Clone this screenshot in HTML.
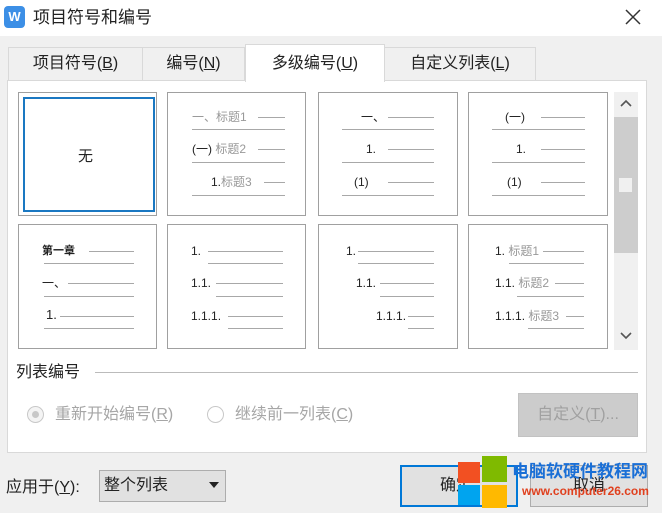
<!DOCTYPE html>
<html><head><meta charset="utf-8"><style>
*{margin:0;padding:0;box-sizing:border-box}
body{width:662px;height:513px;background:#f0f0f0;position:relative;overflow:hidden;font-family:"Liberation Sans","Noto Sans CJK SC",sans-serif;color:#222}
.a{position:absolute;white-space:nowrap}
.box{position:absolute;background:#fff;border:1px solid #a0a0a0}
.ln{position:absolute;height:1px;background:#a8a8a8}
.t{position:absolute;font-size:12px;line-height:14px;white-space:nowrap;color:#222}
.g{color:#999}
.tab{position:absolute;top:47px;height:34px;border:1px solid #d9d9d9;border-bottom:none;background:#f0f0f0;font-size:16px;line-height:32px;text-align:center}
u{text-decoration:underline}
</style></head><body>
<div class="a" style="left:0;top:0;width:662px;height:36px;background:#fff"></div>
<div class="a" style="left:4px;top:6px;width:21px;height:22px;background:#3c8fe6;border-radius:4px;color:#fff;font-size:13px;font-weight:bold;text-align:center;line-height:22px">W</div>
<div class="a" style="left:33px;top:7px;font-size:17px;line-height:22px">项目符号和编号</div>
<svg class="a" style="left:625px;top:9px" width="16" height="16"><path d="M1 1L15 15M15 1L1 15" stroke="#333" stroke-width="1.5"/></svg>

<div class="tab" style="left:8px;width:135px">项目符号(<u>B</u>)</div>
<div class="tab" style="left:142px;width:103px">编号(<u>N</u>)</div>
<div class="tab" style="left:384px;width:152px">自定义列表(<u>L</u>)</div>
<div class="a" style="left:7px;top:80px;width:640px;height:373px;background:#fff;border:1px solid #d9d9d9"></div>
<div class="tab" style="left:245px;top:44px;width:140px;height:38px;background:#fff;border-color:#d9d9d9;line-height:38px">多级编号(<u>U</u>)</div>

<!-- row 1 -->
<div class="box" style="left:18px;top:92px;width:139px;height:124px"></div>
<div class="a" style="left:23px;top:97px;width:132px;height:115px;border:2px solid #1a78c2"></div>
<div class="a" style="left:78px;top:145px;font-size:15px">无</div>

<div class="box" style="left:167px;top:92px;width:139px;height:124px"></div>
<div class="t g" style="left:192px;top:110px">一、标题1</div><div class="ln" style="left:258px;top:117px;width:27px"></div><div class="ln" style="left:192px;top:129px;width:93px"></div>
<div class="t g" style="left:192px;top:142px"><span style="color:#222">(一)</span> 标题2</div><div class="ln" style="left:258px;top:149px;width:27px"></div><div class="ln" style="left:192px;top:162px;width:93px"></div>
<div class="t g" style="left:211px;top:175px"><span style="color:#222">1.</span>标题3</div><div class="ln" style="left:264px;top:182px;width:21px"></div><div class="ln" style="left:192px;top:195px;width:93px"></div>

<div class="box" style="left:318px;top:92px;width:140px;height:124px"></div>
<div class="t" style="left:361px;top:110px">一、</div><div class="ln" style="left:388px;top:117px;width:46px"></div><div class="ln" style="left:342px;top:129px;width:92px"></div>
<div class="t" style="left:366px;top:142px">1.</div><div class="ln" style="left:388px;top:149px;width:46px"></div><div class="ln" style="left:342px;top:162px;width:92px"></div>
<div class="t" style="left:354px;top:175px">(1)</div><div class="ln" style="left:388px;top:182px;width:46px"></div><div class="ln" style="left:342px;top:195px;width:92px"></div>

<div class="box" style="left:468px;top:92px;width:140px;height:124px"></div>
<div class="t" style="left:505px;top:110px">(一)</div><div class="ln" style="left:541px;top:117px;width:44px"></div><div class="ln" style="left:492px;top:129px;width:93px"></div>
<div class="t" style="left:516px;top:142px">1.</div><div class="ln" style="left:541px;top:149px;width:44px"></div><div class="ln" style="left:492px;top:162px;width:93px"></div>
<div class="t" style="left:507px;top:175px">(1)</div><div class="ln" style="left:541px;top:182px;width:44px"></div><div class="ln" style="left:492px;top:195px;width:93px"></div>

<!-- row 2 -->
<div class="box" style="left:18px;top:224px;width:139px;height:125px"></div>
<div class="t" style="left:42px;top:244px;font-size:11px;font-weight:bold">第一章</div><div class="ln" style="left:89px;top:251px;width:45px"></div><div class="ln" style="left:44px;top:263px;width:90px"></div>
<div class="t" style="left:42px;top:276px">一、</div><div class="ln" style="left:68px;top:283px;width:66px"></div><div class="ln" style="left:44px;top:296px;width:90px"></div>
<div class="t" style="left:46px;top:308px;font-size:13px">1.</div><div class="ln" style="left:60px;top:316px;width:74px"></div><div class="ln" style="left:44px;top:328px;width:90px"></div>

<div class="box" style="left:167px;top:224px;width:139px;height:125px"></div>
<div class="t" style="left:191px;top:244px">1.</div><div class="ln" style="left:208px;top:251px;width:75px"></div><div class="ln" style="left:208px;top:263px;width:75px"></div>
<div class="t" style="left:191px;top:276px">1.1.</div><div class="ln" style="left:216px;top:283px;width:67px"></div><div class="ln" style="left:216px;top:296px;width:67px"></div>
<div class="t" style="left:191px;top:309px">1.1.1.</div><div class="ln" style="left:228px;top:316px;width:55px"></div><div class="ln" style="left:228px;top:328px;width:55px"></div>

<div class="box" style="left:318px;top:224px;width:140px;height:125px"></div>
<div class="t" style="left:346px;top:244px">1.</div><div class="ln" style="left:358px;top:251px;width:76px"></div><div class="ln" style="left:358px;top:263px;width:76px"></div>
<div class="t" style="left:356px;top:276px">1.1.</div><div class="ln" style="left:380px;top:283px;width:54px"></div><div class="ln" style="left:380px;top:296px;width:54px"></div>
<div class="t" style="left:376px;top:309px">1.1.1.</div><div class="ln" style="left:408px;top:316px;width:26px"></div><div class="ln" style="left:408px;top:328px;width:26px"></div>

<div class="box" style="left:468px;top:224px;width:140px;height:125px"></div>
<div class="t" style="left:495px;top:244px">1. <span class="g">标题1</span></div><div class="ln" style="left:543px;top:251px;width:41px"></div><div class="ln" style="left:509px;top:263px;width:75px"></div>
<div class="t" style="left:495px;top:276px">1.1. <span class="g">标题2</span></div><div class="ln" style="left:555px;top:283px;width:29px"></div><div class="ln" style="left:517px;top:296px;width:67px"></div>
<div class="t" style="left:495px;top:309px">1.1.1. <span class="g">标题3</span></div><div class="ln" style="left:566px;top:316px;width:18px"></div><div class="ln" style="left:528px;top:328px;width:56px"></div>

<!-- scrollbar -->
<div class="a" style="left:614px;top:92px;width:24px;height:258px;background:#f0f0f0"></div>
<div class="a" style="left:614px;top:117px;width:24px;height:136px;background:#cdcdcd"></div>
<div class="a" style="left:619px;top:178px;width:13px;height:14px;background:#f0f0f0"></div>
<svg class="a" style="left:619px;top:98px" width="14" height="10"><path d="M2 8L7 3L12 8" stroke="#555" stroke-width="1.6" fill="none"/></svg>
<svg class="a" style="left:619px;top:331px" width="14" height="10"><path d="M2 2L7 7L12 2" stroke="#555" stroke-width="1.6" fill="none"/></svg>

<div class="a" style="left:16px;top:363px;font-size:16px;line-height:20px">列表编号</div>
<div class="a" style="left:95px;top:372px;width:543px;height:1px;background:#bbb"></div>

<div class="a" style="left:27px;top:406px;width:17px;height:17px;border:1px solid #c8c8c8;border-radius:50%;background:#f4f4f4"></div>
<div class="a" style="left:32px;top:411px;width:7px;height:7px;border-radius:50%;background:#c8c8c8"></div>
<div class="a" style="left:55px;top:404px;font-size:16px;line-height:22px;color:#a6a6a6">重新开始编号(<u>R</u>)</div>
<div class="a" style="left:207px;top:406px;width:17px;height:17px;border:1px solid #c8c8c8;border-radius:50%;background:#fff"></div>
<div class="a" style="left:235px;top:404px;font-size:16px;line-height:22px;color:#a6a6a6">继续前一列表(<u>C</u>)</div>
<div class="a" style="left:518px;top:393px;width:120px;height:44px;background:#cccccc;border:1px solid #c2c2c2;font-size:16px;line-height:42px;text-align:center;color:#a0a0a0">自定义(<u>T</u>)...</div>

<div class="a" style="left:6px;top:477px;font-size:16px;line-height:22px">应用于(<u>Y</u>):</div>
<div class="a" style="left:99px;top:470px;width:127px;height:32px;background:#e1e1e1;border:1px solid #adadad;font-size:16px;line-height:30px;padding-left:4px">整个列表</div>
<svg class="a" style="left:209px;top:482px" width="10" height="6"><path d="M0 0H10L5 6Z" fill="#222"/></svg>

<div class="a" style="left:400px;top:465px;width:118px;height:42px;background:#e1e1e1;border:2px solid #0078d7;font-size:16px;line-height:38px;padding-left:38px">确定</div>
<div class="a" style="left:530px;top:465px;width:118px;height:42px;background:#e1e1e1;border:1px solid #adadad;font-size:16px;line-height:40px;text-align:center">取消</div>

<div class="a" style="left:458px;top:462px;width:22px;height:21px;background:#f25022"></div>
<div class="a" style="left:482px;top:456px;width:25px;height:26px;background:#7fba00"></div>
<div class="a" style="left:458px;top:485px;width:22px;height:20px;background:#00a4ef"></div>
<div class="a" style="left:482px;top:485px;width:25px;height:23px;background:#ffb900"></div>
<div class="a" style="left:512px;top:462px;font-size:17px;line-height:20px;font-weight:bold;color:#1a6fd6">电脑软硬件教程网</div>
<div class="a" style="left:522px;top:484px;font-size:12px;line-height:14px;font-weight:bold;color:#e0401e">www.computer26.com</div>
</body></html>
